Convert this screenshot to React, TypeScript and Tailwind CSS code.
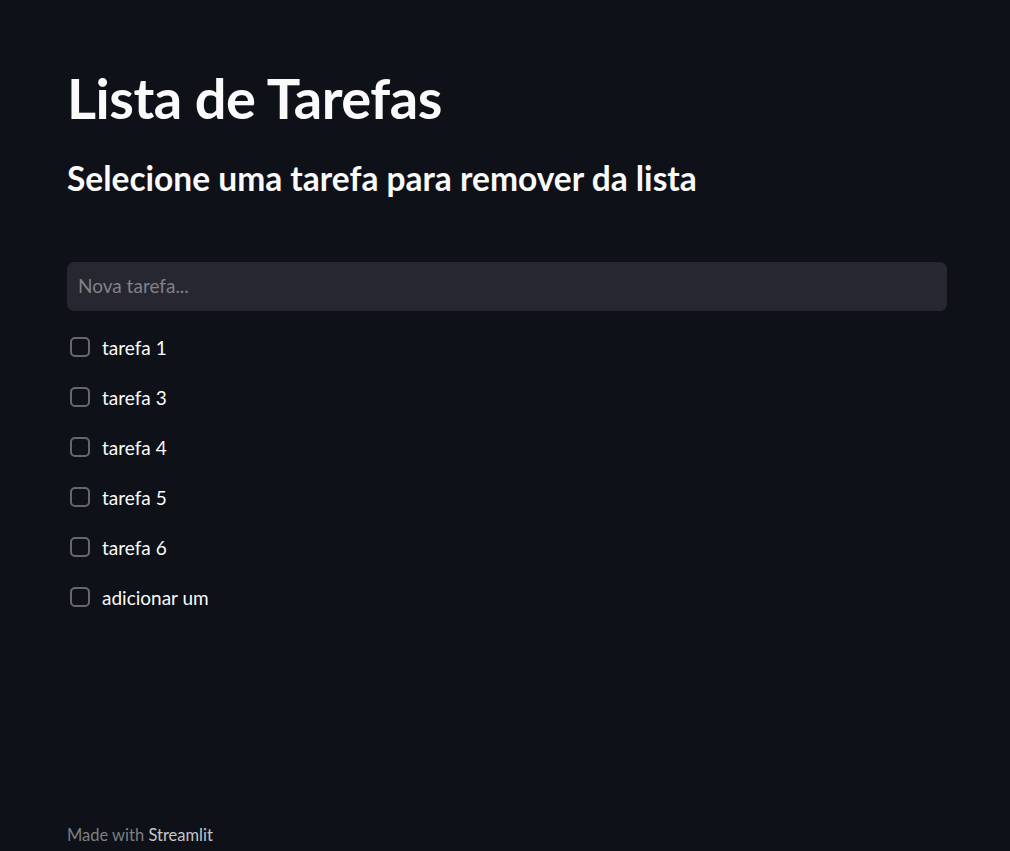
import React from "react";

const tasks = ["tarefa 1", "tarefa 3", "tarefa 4", "tarefa 5", "tarefa 6", "adicionar um"];

export default function App() {
  return (
    <div
      className="min-h-[851px] w-full bg-[#0e1117] text-[#fafafa] flex flex-col"
      style={{ fontFamily: "Lato, 'Noto Sans', sans-serif" }}
    >
      <div className="flex-1 px-[67px] pt-[66px]">
        <h1 className="text-[56px] leading-[64px] font-bold tracking-[-0.5px]">Lista de Tarefas</h1>
        <h2 className="mt-[28px] text-[33.5px] leading-[40px] font-bold">
          Selecione uma tarefa para remover da lista
        </h2>
        <div className="mt-[64px] w-[880px]">
          <div className="h-[49px] rounded-[7px] bg-[#262730] flex items-center px-[11px]">
            <input
              className="w-full bg-transparent outline-none text-[19px] text-[#fafafa] placeholder:text-[#808189]"
              placeholder="Nova tarefa..."
              style={{ fontFamily: "Lato, 'Noto Sans', sans-serif" }}
            />
          </div>
          <div className="mt-[11px] flex flex-col">
            {tasks.map((t) => (
              <label key={t} className="h-[50px] flex items-center">
                <span className="ml-[3px] w-[20px] h-[20px] rounded-[5px] border-2 border-[#66686d] bg-[#0e1117]" />
                <span className="ml-[12px] text-[19px] leading-none">{t}</span>
              </label>
            ))}
          </div>
        </div>
      </div>
      <div className="px-[67px] pb-[3px] text-[16.5px] text-[#7d7f83]">
        Made with <span className="text-[#c5c6c8]">Streamlit</span>
      </div>
    </div>
  );
}
